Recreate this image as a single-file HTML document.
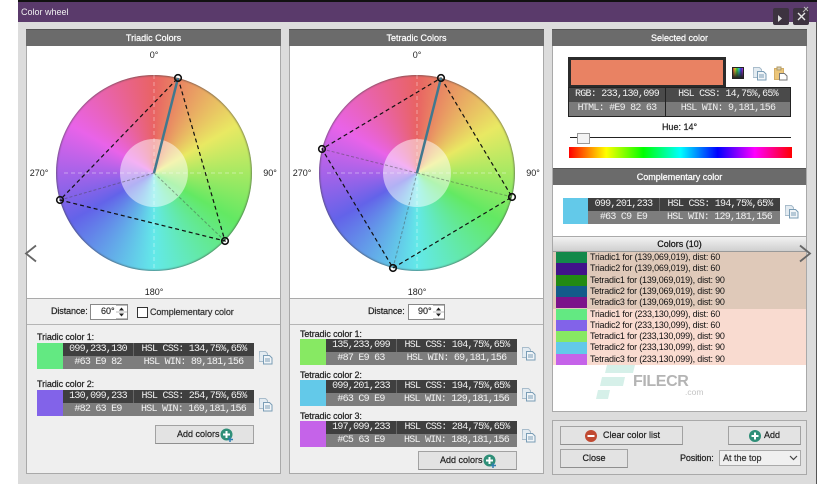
<!DOCTYPE html>
<html><head><meta charset="utf-8"><style>
html,body{margin:0;padding:0;background:#fff}
body{width:836px;height:484px;position:relative;overflow:hidden;font-family:"Liberation Sans",sans-serif;font-size:9px;color:#111}
div,span{position:absolute;box-sizing:border-box;white-space:nowrap}
.s{-webkit-text-stroke:.22px currentColor}
.hd{background:#6b6b6b;color:#fff;text-align:center;font-size:9px;-webkit-text-stroke:.22px #fff;line-height:16px;height:17px;border-top:1px solid #555}
.panel{background:#efefef;border:1px solid #a9a9a9}
.wheel{width:196px;height:196px;border-radius:50%;background:conic-gradient(hsl(0,75%,65%),hsl(60,75%,65%),hsl(120,75%,65%),hsl(180,75%,65%),hsl(240,75%,65%),hsl(300,75%,65%),hsl(360,75%,65%));box-shadow:inset 0 0 1.5px 1px rgba(70,70,70,.55)}
.inner{width:68px;height:68px;border-radius:50%;background:rgba(255,255,255,.5)}
.t{width:217px;height:26px}
.t .sw{left:0;top:0;width:26px;height:26px}
.t .a,.t .b,.t .c,.t .d{height:13px;line-height:13px;text-align:center;font-family:"Liberation Mono",monospace;font-size:10px;letter-spacing:-.75px;color:#f2f2f2}
.t .a{left:26px;top:0;width:70px;background:#3f3f3f}
.t .b{left:96px;top:0;width:121px;background:#3f3f3f;border-left:1px solid #666}
.t .c{left:26px;top:13px;width:70px;background:#7d7d7d}
.t .d{left:96px;top:13px;width:121px;background:#7d7d7d}
.lb{font-size:9px;letter-spacing:-.1px;-webkit-text-stroke:.22px #222;color:#222;line-height:11px}
.btn{background:#e3e3e3;border:1px solid #a2a2a2;border-bottom-color:#8f8f8f;text-align:center;font-size:9px;-webkit-text-stroke:.22px #222;color:#222}
.row{left:553px;width:253px;height:11.3px;line-height:11.3px;font-size:9px;letter-spacing:-.2px;color:#111}
.row span{left:3px;top:0;width:31px;height:11.3px}
.row i{position:absolute;left:37px;top:0;font-style:normal}
.deg{font-size:9px;color:#222;text-align:center;width:30px;line-height:11px}
</style></head><body>
<svg width="0" height="0" style="position:absolute"><defs>
<g id="cp"><path d="M.5 .5h6l2 2v8h-8.500z" fill="#e3ebf1" stroke="#a8bccb"/><path d="M4.500 4.500h6l2.500 2.500v6h-8.500z" fill="#f1f5f8" stroke="#7a9db6"/><path d="M6 8h5M6 10h5" stroke="#7a9db6"/></g>
</defs></svg>

<!-- window -->
<div style="left:18px;top:0;width:799px;height:484px;background:#dcdcdc;border-right:1px solid #555"></div>
<div style="left:18px;top:0;width:799px;height:2px;background:#111"></div>
<div style="left:18px;top:2px;width:799px;height:20px;background:#5a3a6b"></div>
<div style="left:21px;top:6px;color:#f0f0f0;font-size:9px;line-height:13px">Color wheel</div>
<div style="left:773px;top:8px;width:16px;height:17px;background:#3d3340;border-radius:2px"></div>
<div style="left:793px;top:8px;width:16px;height:17px;background:#3d3340;border-radius:2px"></div>
<svg style="position:absolute;left:773px;top:6px" width="42" height="20"><path d="M5 9l4 3.500-4 3.500z" fill="#ddd"/><path d="M25 14l7-7M25 7l7 7" stroke="#e6e6e6" stroke-width="1.400"/><path d="M30 6l5-5M31 1l4 4" stroke="#bbb"/></svg>

<!-- left panel -->
<div class="panel" style="left:26px;top:29px;width:255px;height:445px"></div>
<div class="hd" style="left:26px;top:29px;width:255px">Triadic Colors</div>
<div style="left:27px;top:46px;width:253px;height:253px;background:#fff;border-bottom:1px solid #aaa"></div>
<div class="wheel" style="left:56px;top:75px"></div>
<div class="inner" style="left:120px;top:139px"></div>
<svg style="position:absolute;left:27px;top:46px" width="253" height="253">
<path d="M127 8V245M37 127H217" stroke="#fff" stroke-opacity=".4" stroke-dasharray="4 3" fill="none"/>
<path d="M127 127L198 195M127 127L33 154" stroke="#444" stroke-opacity=".45" stroke-dasharray="3 2" fill="none"/>
<path d="M151 32L198 195L33 154Z" fill="none" stroke="#111" stroke-width="1.200" stroke-dasharray="4 3"/>
<path d="M127 127L151 32" stroke="#41788e" stroke-width="2.500"/>
<circle cx="151" cy="32" r="3.300" fill="none" stroke="#111" stroke-width="1.600"/>
<circle cx="198" cy="195" r="3.300" fill="none" stroke="#111" stroke-width="1.600"/>
<circle cx="33" cy="154" r="3.300" fill="none" stroke="#111" stroke-width="1.600"/>
</svg>
<div class="deg" style="left:139px;top:50px">0°</div>
<div class="deg" style="left:24px;top:168px">270°</div>
<div class="deg" style="left:255px;top:168px">90°</div>
<div class="deg" style="left:139px;top:287px">180°</div>

<div class="lb" style="left:51px;top:306px">Distance:</div>
<div style="left:90px;top:304px;width:38px;height:16px;background:#fff;border:1px solid #888"></div>
<div class="s" style="left:101px;top:306px;font-size:9px;line-height:11px;color:#333">60°</div>
<svg style="position:absolute;left:116px;top:305px" width="11" height="14"><path d="M0 .5h11M0 13.500h11M0 7h11" stroke="#bbb"/><path d="M5.500 2.500l2.500 3h-5zM5.500 11.500l2.500-3h-5z" fill="#222"/></svg>
<div style="left:137px;top:304px;width:11px;height:11px;margin-top:3px;background:#fff;border:1px solid #333"></div>
<div class="s" style="left:150px;top:307px;font-size:9px;letter-spacing:-.1px;line-height:11px;color:#333">Complementary color</div>
<div style="left:27px;top:324px;width:253px;height:1px;background:#b5b5b5"></div>

<div class="lb" style="left:37px;top:332px">Triadic color 1:</div>
<div class="t" style="left:37px;top:343px"><span class="sw" style="background:#63e982"></span><span class="a">099,233,130</span><span class="b">HSL CSS: 134,75%,65%</span><span class="c">#63 E9 82</span><span class="d">HSL WIN: 89,181,156</span></div>
<svg style="position:absolute;left:259px;top:351px" width="14" height="14"><use href="#cp"/></svg>
<div class="lb" style="left:37px;top:379px">Triadic color 2:</div>
<div class="t" style="left:37px;top:390px"><span class="sw" style="background:#8263e9"></span><span class="a">130,099,233</span><span class="b">HSL CSS: 254,75%,65%</span><span class="c">#82 63 E9</span><span class="d">HSL WIN: 169,181,156</span></div>
<svg style="position:absolute;left:259px;top:398px" width="14" height="14"><use href="#cp"/></svg>
<div class="btn" style="left:155px;top:425px;width:99px;height:19px;line-height:17px;text-align:left;padding-left:21px">Add colors</div>
<svg style="position:absolute;left:220px;top:428px" width="14" height="14"><circle cx="6.500" cy="6.500" r="6" fill="#2f8f78"/><path d="M6.500 3v7M3 6.500h7" stroke="#fff" stroke-width="2"/><path d="M10 9v5M8 11.500h5" stroke="#2f7fb0" stroke-width="1.500"/></svg>

<!-- middle panel -->
<div class="panel" style="left:289px;top:29px;width:255px;height:445px"></div>
<div class="hd" style="left:289px;top:29px;width:255px">Tetradic Colors</div>
<div style="left:290px;top:46px;width:253px;height:253px;background:#fff;border-bottom:1px solid #aaa"></div>
<div class="wheel" style="left:319px;top:75px"></div>
<div class="inner" style="left:383px;top:139px"></div>
<svg style="position:absolute;left:290px;top:46px" width="253" height="253">
<path d="M127 8V245M37 127H217" stroke="#fff" stroke-opacity=".4" stroke-dasharray="4 3" fill="none"/>
<path d="M127 127L222 151M127 127L32 103M127 127L103 222" stroke="#444" stroke-opacity=".45" stroke-dasharray="3 2" fill="none"/>
<path d="M151 32L222 151L103 222L32 103Z" fill="none" stroke="#111" stroke-width="1.200" stroke-dasharray="4 3"/>
<path d="M127 127L151 32" stroke="#41788e" stroke-width="2.500"/>
<circle cx="151" cy="32" r="3.300" fill="none" stroke="#111" stroke-width="1.600"/>
<circle cx="222" cy="151" r="3.300" fill="none" stroke="#111" stroke-width="1.600"/>
<circle cx="103" cy="222" r="3.300" fill="none" stroke="#111" stroke-width="1.600"/>
<circle cx="32" cy="103" r="3.300" fill="none" stroke="#111" stroke-width="1.600"/>
</svg>
<div class="deg" style="left:402px;top:50px">0°</div>
<div class="deg" style="left:287px;top:168px">270°</div>
<div class="deg" style="left:518px;top:168px">90°</div>
<div class="deg" style="left:402px;top:287px">180°</div>

<div class="lb" style="left:368px;top:306px">Distance:</div>
<div style="left:408px;top:304px;width:37px;height:16px;background:#fff;border:1px solid #888"></div>
<div class="s" style="left:418px;top:306px;font-size:9px;line-height:11px;color:#333">90°</div>
<svg style="position:absolute;left:433px;top:305px" width="11" height="14"><path d="M0 .5h11M0 13.500h11M0 7h11" stroke="#bbb"/><path d="M5.500 2.500l2.500 3h-5zM5.500 11.500l2.500-3h-5z" fill="#222"/></svg>
<div style="left:290px;top:324px;width:253px;height:1px;background:#b5b5b5"></div>

<div class="lb" style="left:300px;top:329px">Tetradic color 1:</div>
<div class="t" style="left:300px;top:339px"><span class="sw" style="background:#87e963"></span><span class="a">135,233,099</span><span class="b">HSL CSS: 104,75%,65%</span><span class="c">#87 E9 63</span><span class="d">HSL WIN: 69,181,156</span></div>
<svg style="position:absolute;left:522px;top:347px" width="14" height="14"><use href="#cp"/></svg>
<div class="lb" style="left:300px;top:370px">Tetradic color 2:</div>
<div class="t" style="left:300px;top:380px"><span class="sw" style="background:#63c9e9"></span><span class="a">099,201,233</span><span class="b">HSL CSS: 194,75%,65%</span><span class="c">#63 C9 E9</span><span class="d">HSL WIN: 129,181,156</span></div>
<svg style="position:absolute;left:522px;top:388px" width="14" height="14"><use href="#cp"/></svg>
<div class="lb" style="left:300px;top:411px">Tetradic color 3:</div>
<div class="t" style="left:300px;top:421px"><span class="sw" style="background:#c563e9"></span><span class="a">197,099,233</span><span class="b">HSL CSS: 284,75%,65%</span><span class="c">#C5 63 E9</span><span class="d">HSL WIN: 188,181,156</span></div>
<svg style="position:absolute;left:522px;top:429px" width="14" height="14"><use href="#cp"/></svg>
<div class="btn" style="left:418px;top:451px;width:99px;height:19px;line-height:17px;text-align:left;padding-left:21px">Add colors</div>
<svg style="position:absolute;left:483px;top:454px" width="14" height="14"><circle cx="6.500" cy="6.500" r="6" fill="#2f8f78"/><path d="M6.500 3v7M3 6.500h7" stroke="#fff" stroke-width="2"/><path d="M10 9v5M8 11.500h5" stroke="#2f7fb0" stroke-width="1.500"/></svg>

<!-- right top -->
<div style="left:552px;top:29px;width:255px;height:383px;background:#fff;border:1px solid #a9a9a9"></div>
<div class="hd" style="left:552px;top:29px;width:255px">Selected color</div>
<div style="left:568px;top:57px;width:158px;height:31px;background:#e98263;border:3px solid #2b2b2b"></div>
<div style="left:568px;top:87px;width:223px;height:30px;background:#222"></div>
<div style="left:569px;top:88px;width:96px;height:14px;background:#4a4a4a;color:#f2f2f2;font:10px/14px 'Liberation Mono',monospace;letter-spacing:-.75px;text-align:center">RGB: 233,130,099</div>
<div style="left:666px;top:88px;width:124px;height:14px;background:#4a4a4a;color:#f2f2f2;font:10px/14px 'Liberation Mono',monospace;letter-spacing:-.75px;text-align:center">HSL CSS: 14,75%,65%</div>
<div style="left:569px;top:102px;width:96px;height:14px;background:#7a7a7a;color:#eee;font:10px/14px 'Liberation Mono',monospace;letter-spacing:-.75px;text-align:center">HTML: #E9 82 63</div>
<div style="left:666px;top:102px;width:124px;height:14px;background:#7a7a7a;color:#eee;font:10px/14px 'Liberation Mono',monospace;letter-spacing:-.75px;text-align:center">HSL WIN: 9,181,156</div>
<div style="left:732px;top:67px;width:12px;height:12px;border:1px solid #222;background:linear-gradient(to bottom,transparent,#222),linear-gradient(to right,#d33,#dd3,#3c3,#3cc,#33d,#c3c)"></div>
<svg style="position:absolute;left:753px;top:67px" width="14" height="14"><use href="#cp"/></svg>
<svg style="position:absolute;left:774px;top:66px" width="14" height="15"><path d="M.5 2.500h9v11h-9z" fill="#ecc67a" stroke="#d4ae66"/><path d="M3 1h4v3h-4z" fill="#d8d0b8" stroke="#b09a66"/><path d="M5.500 7.500h5l2.500 2.500v4h-7.500z" fill="#fff" stroke="#777"/></svg>
<div class="s" style="left:552px;width:255px;top:122px;text-align:center;font-size:9px;line-height:11px;color:#222">Hue: 14°</div>
<div style="left:570px;top:137px;width:221px;height:1px;background:#222"></div>
<div style="left:577px;top:133px;width:13px;height:11px;background:#f3f3f3;border:1px solid #999"></div>
<div style="left:569px;top:147px;width:223px;height:11px;background:linear-gradient(to right,#f00,#ff0,#0f0,#0ff,#00f,#f0f,#f00)"></div>

<div class="hd" style="left:553px;top:168px;width:253px">Complementary color</div>
<div class="t" style="left:563px;top:198px"><span class="sw" style="width:25px;background:#63c9e9"></span><span class="a" style="left:25px;width:71px">099,201,233</span><span class="b">HSL CSS: 194,75%,65%</span><span class="c" style="left:25px;width:71px">#63 C9 E9</span><span class="d">HSL WIN: 129,181,156</span></div>
<svg style="position:absolute;left:785px;top:205px" width="14" height="14"><use href="#cp"/></svg>

<div style="left:553px;top:236px;width:253px;height:1px;background:#aaa"></div>
<div class="s" style="left:553px;top:237px;width:253px;height:15px;background:linear-gradient(#f2f2f2,#cfcfcf);border-bottom:1px solid #999;text-align:center;font-size:9px;line-height:15px;color:#111">Colors (10)</div>
<div style="left:553px;top:252px;width:253px;height:56.500px;background:#dfc9b9"></div>
<div style="left:553px;top:308.500px;width:253px;height:56.500px;background:#f9dbd0"></div>
<div class="row" style="top:252px"><span style="background:#13894a"></span><i>Triadic1 for (139,069,019), dist: 60</i></div>
<div class="row" style="top:263.300px"><span style="background:#41138a"></span><i>Triadic2 for (139,069,019), dist: 60</i></div>
<div class="row" style="top:274.600px"><span style="background:#228a13"></span><i>Tetradic1 for (139,069,019), dist: 90</i></div>
<div class="row" style="top:285.900px"><span style="background:#135b8a"></span><i>Tetradic2 for (139,069,019), dist: 90</i></div>
<div class="row" style="top:297.200px"><span style="background:#7c138a"></span><i>Tetradic3 for (139,069,019), dist: 90</i></div>
<div class="row" style="top:308.500px"><span style="background:#63e982"></span><i>Triadic1 for (233,130,099), dist: 60</i></div>
<div class="row" style="top:319.800px"><span style="background:#8263e9"></span><i>Triadic2 for (233,130,099), dist: 60</i></div>
<div class="row" style="top:331.100px"><span style="background:#87e963"></span><i>Tetradic1 for (233,130,099), dist: 90</i></div>
<div class="row" style="top:342.400px"><span style="background:#63c9e9"></span><i>Tetradic2 for (233,130,099), dist: 90</i></div>
<div class="row" style="top:353.700px"><span style="background:#c563e9"></span><i>Tetradic3 for (233,130,099), dist: 90</i></div>

<!-- watermark -->
<svg style="position:absolute;left:595px;top:365px" width="42" height="36"><path d="M12 0h28l-2 8h-28zM7 12h23l-2 9h-23zM3 25h12l-2 9h-12z" fill="#d6f0e9"/></svg>
<div style="left:633px;top:372px;font-size:16px;font-weight:bold;letter-spacing:-.4px;line-height:20px;color:#b4b4b4">FILECR</div>
<div style="left:685px;top:387px;font-size:8.5px;line-height:11px;color:#c4c4c4">.com</div>

<!-- chevrons -->
<svg style="position:absolute;left:24px;top:244px" width="14" height="20"><path d="M12 1.500L2 9.500L12 17.500" fill="none" stroke="#666" stroke-width="1.800"/></svg>
<svg style="position:absolute;left:798px;top:244px" width="14" height="20"><path d="M2 1.500L12 9.500L2 17.500" fill="none" stroke="#666" stroke-width="1.800"/></svg>

<!-- bottom right -->
<div style="left:552px;top:420px;width:255px;height:55px;background:#e2e2e2;border:1px solid #a9a9a9"></div>
<div class="btn" style="left:560px;top:426px;width:123px;height:19px;line-height:17px;text-align:left;padding-left:42px">Clear color list</div>
<svg style="position:absolute;left:585px;top:430px" width="12" height="12"><circle cx="6" cy="6" r="6" fill="#c14a32"/><path d="M2.500 6h7" stroke="#fff" stroke-width="2"/></svg>
<div class="btn" style="left:728px;top:426px;width:73px;height:19px;line-height:17px;text-align:left;padding-left:35px">Add</div>
<svg style="position:absolute;left:749px;top:430px" width="12" height="12"><circle cx="6" cy="6" r="6" fill="#2f8f78"/><path d="M2.500 6h7M6 2.500v7" stroke="#fff" stroke-width="2"/></svg>
<div class="btn" style="left:560px;top:449px;width:68px;height:19px;line-height:17px">Close</div>
<div class="lb" style="left:680px;top:453px">Position:</div>
<div class="s" style="left:719px;top:450px;width:82px;height:16px;background:#f0f0f0;border:1px solid #aaa;font-size:9px;line-height:14px;padding-left:3px;color:#333">At the top</div>
<svg style="position:absolute;left:789px;top:455px" width="9" height="6"><path d="M1 1l3.500 3.500L8 1" fill="none" stroke="#444" stroke-width="1.200"/></svg>
</body></html>
